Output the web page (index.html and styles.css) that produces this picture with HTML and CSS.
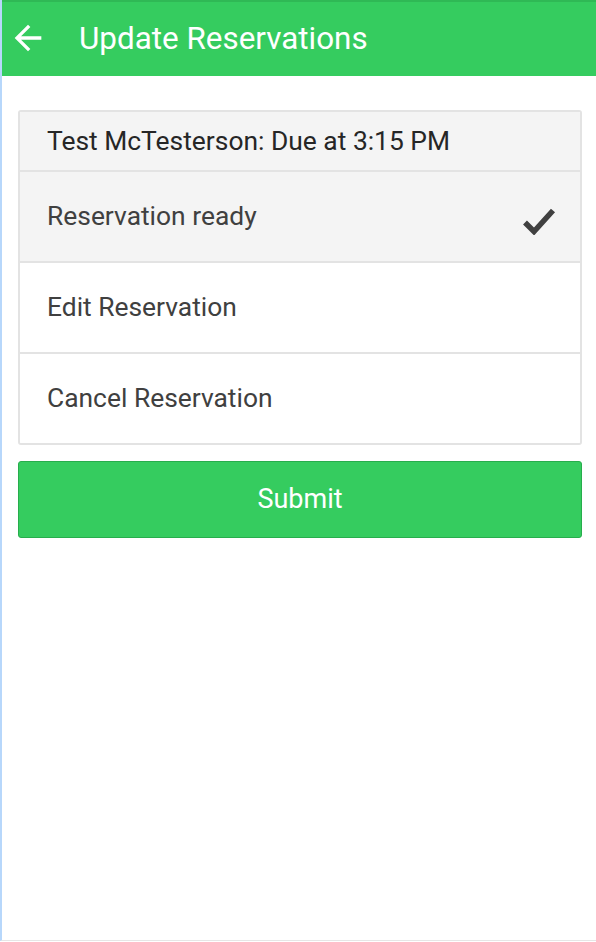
FILE: index.html
```html
<!DOCTYPE html>
<html>
<head>
<meta charset="utf-8">
<link rel="stylesheet" href="styles.css">
</head>
<body>
<div class="app">
  <header class="topbar">
    <svg class="back" width="40" height="40" viewBox="0 0 24 24" aria-hidden="true"><path d="M20 11H7.83l5.59-5.59L12 4l-8 8 8 8 1.41-1.41L7.83 13H20v-2z" fill="#fff"/></svg>
    <h1 class="title">Update Reservations</h1>
  </header>
  <main class="content">
    <div class="card">
      <div class="card-head">Test McTesterson: Due at 3:15 PM</div>
      <div class="option selected">
        <span>Reservation ready</span>
        <svg class="check" width="34" height="30" viewBox="0 0 34 30" aria-hidden="true"><path d="M3 17.5l9 9 19-21" fill="none" stroke="#404040" stroke-width="5.5" stroke-linejoin="miter"/></svg>
      </div>
      <div class="option"><span>Edit Reservation</span></div>
      <div class="option"><span>Cancel Reservation</span></div>
    </div>
    <button class="submit">Submit</button>
  </main>
</div>
</body>
</html>
```
FILE: styles.css
```css
html, body {
  margin: 0;
  padding: 0;
  height: 100%;
}
body {
  font-family: Roboto, "Noto Sans", sans-serif;
  background: #fff;
}
.app {
  height: 941px;
  border-left: 2px solid #b7d7fb;
  border-bottom: 1px solid #e6e6e6;
  box-sizing: border-box;
}
.topbar {
  height: 76px;
  background: #35cc5f;
  border-top: 2px solid #2fb955;
  box-sizing: border-box;
  display: flex;
  align-items: center;
  padding-left: 6px;
  padding-bottom: 2px;
}
.back {
  display: block;
}
.title {
  margin: 0 0 0 31px;
  font-size: 31.4px;
  font-weight: 400;
  color: #fff;
}
.content {
  padding: 34px 14px 0 16px;
}
.card {
  border: 2px solid #e3e3e3;
  border-radius: 3px;
  overflow: hidden;
}
.card-head {
  height: 58px;
  background: #f4f4f4;
  display: flex;
  align-items: center;
  padding-left: 27px;
  font-size: 26.4px;
  color: #262626;
  border-bottom: 2px solid #e3e3e3;
}
.option {
  height: 89px;
  display: flex;
  align-items: center;
  justify-content: space-between;
  padding: 0 24px 0 27px;
  font-size: 26.4px;
  color: #404040;
  border-bottom: 2px solid #e3e3e3;
  background: #fff;
}
.option span {
  margin-top: -2px;
}
.option:last-child {
  border-bottom: none;
}
.option.selected {
  background: #f4f4f4;
}
.check {
  display: block;
  margin-top: 6px;
}
.submit {
  display: block;
  width: 100%;
  height: 77px;
  margin-top: 16px;
  background: #35cc5f;
  border: 1px solid #27ad4c;
  border-radius: 3px;
  color: #fff;
  font-family: Roboto, "Noto Sans", sans-serif;
  font-size: 27px;
  padding: 0 0 2px;
}
```
